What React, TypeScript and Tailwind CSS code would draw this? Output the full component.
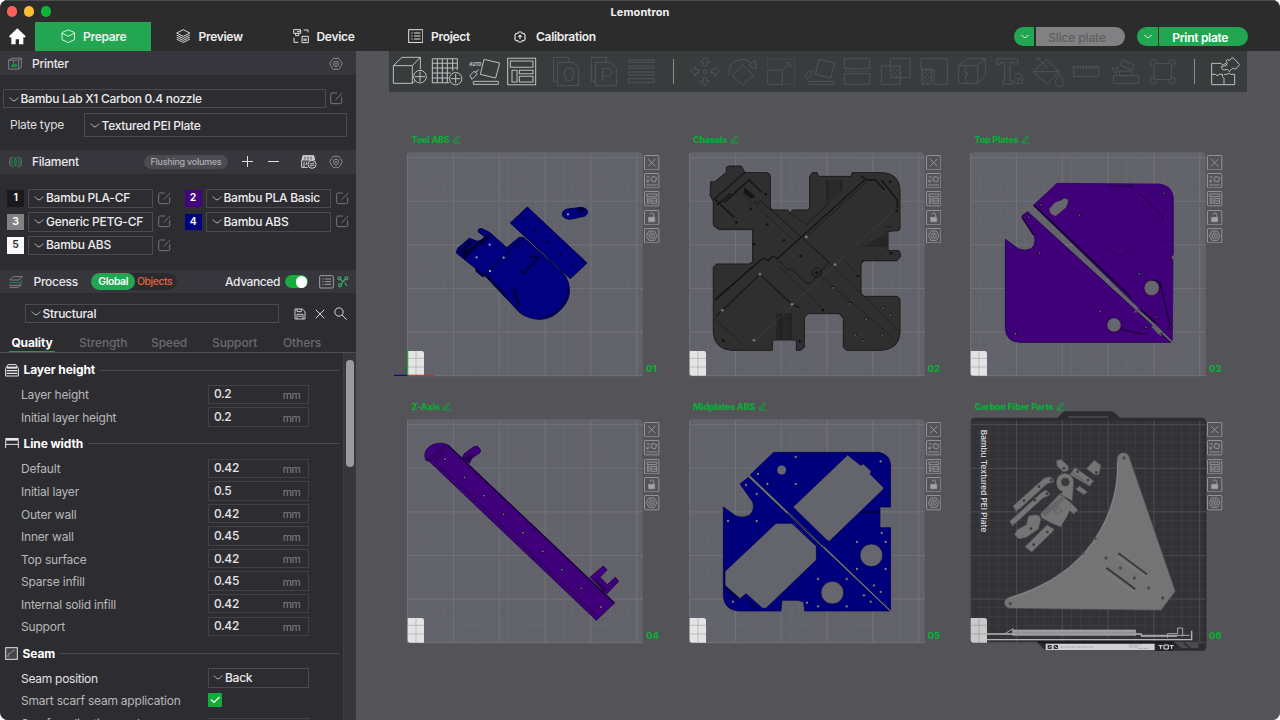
import React, { ReactNode } from "react";

/* ---------- small shared pieces ---------- */

function Chevron({ className = "" }: { className?: string }) {
  return (
    <svg width="10" height="5" viewBox="0 0 10 5" className={"shrink-0 " + className} fill="none" stroke="currentColor" strokeWidth="1">
      <path d="M0.5 0.8 C2 1.2 3.6 3.9 5 3.9 S8 1.2 9.5 0.8" />
    </svg>
  );
}

function EditIcon() {
  return (
    <svg width="13" height="13" viewBox="0 0 39 39" fill="none" stroke="#77777b" strokeWidth="3" className="shrink-0">
      <path d="M21 3H6Q2 3 2 8V31Q2 35 6 35H31Q35 35 35 31V16" />
      <path d="M17 23 L37 3" />
    </svg>
  );
}

function HexGear() {
  return (
    <svg width="14" height="14" viewBox="0 0 42 42" fill="none" stroke="#929297" strokeWidth="2.8" className="shrink-0">
      <path d="M14 3 Q21 7 28 3 L32 8 L34 11 L40 20 L34 30 L32 34 L28 38 Q21 34 14 38 L10 34 L8 30 L2 20 L8 11 L10 8 Z" strokeLinejoin="round" />
      <circle cx="21" cy="20.5" r="8" />
      <circle cx="21" cy="20.5" r="2" />
    </svg>
  );
}

function Select({ text, className }: { text: string; className: string }) {
  return (
    <div className={"flex items-center border border-[#4a4a51] text-[#ececee] text-[12px] font-medium " + className}>
      <Chevron className="text-[#b5b5b8] mr-[2px]" />
      <span className="whitespace-nowrap">{text}</span>
    </div>
  );
}

/* ---------- header ---------- */

function Header() {
  return (
    <header className="h-[51px] flex flex-col bg-[#2c2c2d] border-t border-[#4c4c4d]">
      <div className="h-[21px] grid grid-cols-3 items-center">
        <div className="flex items-center gap-[6.5px] pl-[6.5px]">
          <span className="size-[10.5px] rounded-full bg-[#fe5f57]" />
          <span className="size-[10.5px] rounded-full bg-[#febc2e]" />
          <span className="size-[10.5px] rounded-full bg-[#0eb435]" />
        </div>
        <div className="text-center text-[11px] leading-[20px] font-bold text-[#f2f2f2] tracking-[0.1px]">Lemontron</div>
      </div>
      <nav className="h-[29px] flex items-center text-[12px] font-semibold text-[#ededed] tracking-[-0.3px]">
        <div className="w-[35px] flex items-center pl-[8.5px]">
          <svg width="17" height="17" viewBox="0 0 51 51" fill="#fff">
            <path d="M25 1 L50 25 L46 29 L43 27 V49 H30 V34 H20 V49 H7 V27 L4 29 L0 25 Z" />
          </svg>
        </div>
        <div className="w-[116px] h-[29px] bg-[#22a652] flex items-center pl-[25.5px]">
          <svg width="14.5" height="14.5" viewBox="0 0 43 42" fill="none" stroke="#dff3e6" strokeWidth="2.8" strokeLinejoin="round">
            <path d="M21.5 2 L40 10 V31 L21.5 40 L3 31 V10 Z M3 12 L21.5 21 L40 12" />
          </svg>
          <span className="ml-[8px] pt-[1px]">Prepare</span>
        </div>
        <div className="w-[117px] flex items-center pl-[25px]">
          <svg width="14.5" height="14.5" viewBox="0 0 43 43" fill="none" stroke="#e0e0e0" strokeWidth="2.8" strokeLinejoin="round">
            <path d="M21.5 2 L41 12 L21.5 22 L2 12 Z M2 18 L21.5 28 L41 18 M2 24 L21.5 34 L41 24 M2 30 L21.5 40 L41 30" />
          </svg>
          <span className="ml-[8px] pt-[1px]">Preview</span>
        </div>
        <div className="w-[117px] flex items-center pl-[25px]">
          <svg width="16" height="15" viewBox="0 0 48 45" fill="none" stroke="#e0e0e0" strokeWidth="3">
            <path d="M2 2H23V13H2Z M8 13V20H17V13 M12 8H23 M32 3H45V10 M3 26V40H16 M27 22H46V41H27Z M33 28V36 M39 28V36 M33 33H39" />
          </svg>
          <span className="ml-[7.5px] pt-[1px]">Device</span>
        </div>
        <div className="w-[117px] flex items-center pl-[22.5px]">
          <svg width="15.5" height="14.5" viewBox="0 0 46 43" fill="none" stroke="#e0e0e0" strokeWidth="3">
            <rect x="2" y="2" width="42" height="38" />
            <path d="M10 12H14 M18 12H37 M10 21H14 M18 21H37 M10 30H14 M18 30H37" />
          </svg>
          <span className="ml-[8px] pt-[1px]">Project</span>
        </div>
        <div className="flex items-center pl-[12px]">
          <svg width="12" height="12" viewBox="0 0 36 36" fill="none" stroke="#e0e0e0" strokeWidth="3.4" strokeLinejoin="round">
            <path d="M14 3 H22 L25 7 L31 8 L34 14 L32 18 L34 23 L31 28 L25 29 L22 33 H14 L11 29 L5 28 L2 23 L4 18 L2 14 L5 8 L11 7 Z" />
            <path d="M18 25V13 M13 18L18 12L23 18" />
          </svg>
          <span className="ml-[10px] pt-[1px]">Calibration</span>
        </div>
        <div className="ml-auto mr-[32.5px] flex items-center gap-[12.5px]">
          <div className="flex h-[19.5px] gap-[1.5px] rounded-full overflow-hidden">
            <div className="w-[20.5px] bg-[#22a652] flex items-center justify-center pl-[2px]"><Chevron className="text-white scale-[0.85]" /></div>
            <div className="w-[89px] bg-[#818183] text-[#5e5e60] flex items-center justify-center pr-[6px] pt-[2px] tracking-[-0.15px] font-medium">Slice plate</div>
          </div>
          <div className="flex h-[19.5px] gap-[1.5px] rounded-full overflow-hidden">
            <div className="w-[20.5px] bg-[#22a652] flex items-center justify-center pl-[2px]"><Chevron className="text-white scale-[0.85]" /></div>
            <div className="w-[88.5px] bg-[#22a652] text-white flex items-center justify-center pr-[6px] pt-[2px]">Print plate</div>
          </div>
        </div>
      </nav>
    </header>
  );
}

/* ---------- sidebar ---------- */

function Filament({ n, name, swatch, digit }: { n: number; name: string; swatch: string; digit: string }) {
  return (
    <div className="flex items-center h-[19.5px]">
      <span className={"w-[17px] h-[16.5px] flex items-center justify-center text-[10.5px] font-semibold " + swatch + " " + digit}>{n}</span>
      <Select text={name} className="w-[125px] h-[19.5px] pl-[5px] ml-[4px] mr-[5px]" />
      <EditIcon />
    </div>
  );
}

function Heading({ icon, text }: { icon: ReactNode; text: string }) {
  return (
    <div className="flex items-center h-[16px] pl-[5px] pr-[4px]">
      {icon}
      <span className="ml-[4.5px] mr-[4.5px] text-[12px] font-bold text-white tracking-[-0.1px]">{text}</span>
      <span className="flex-1 h-px bg-[#4a4a4e]" />
    </div>
  );
}

function Field({ label, value }: { label: string; value: string }) {
  return (
    <div className="flex items-center h-[22.55px] pl-[21px]">
      <span className="w-[187px] text-[12px] text-[#b8b8ba] pt-[2px] tracking-[-0.2px]">{label}</span>
      <div className="w-[101px] h-[19.5px] border border-[#414147] flex items-center justify-between pl-[5px] pr-[7.5px]">
        <span className="text-[12px] font-medium text-[#e4e4e6] tracking-[-0.35px]">{value}</span>
        <span className="text-[10.5px] text-[#818184] pt-[3px]">mm</span>
      </div>
    </div>
  );
}

const widths: [string, string][] = [
  ["Default", "0.42"],
  ["Initial layer", "0.5"],
  ["Outer wall", "0.42"],
  ["Inner wall", "0.45"],
  ["Top surface", "0.42"],
  ["Sparse infill", "0.45"],
  ["Internal solid infill", "0.42"],
  ["Support", "0.42"],
];

function Sidebar() {
  return (
    <aside className="w-[356px] shrink-0 bg-[#2d2d31] flex flex-col overflow-hidden tracking-[-0.27px]">
      <div className="h-[24px] shrink-0 bg-[#36363c] flex items-center pl-[8px] pr-[13px] pt-[1px]">
        <svg width="14" height="13" viewBox="0 0 42 38" fill="none" stroke="#8b8b90" strokeWidth="2.6">
          <path d="M2 9L12 3H40V30L32 36H2Z M2 9H32V36 M32 9L40 3" />
          <path d="M9 30V24L16 20H27V30Z" fill="#1d8a45" stroke="none" />
          <path d="M17 10V19" />
        </svg>
        <span className="ml-[10px] text-[12px] font-medium text-[#e8e8ea]">Printer</span>
        <div className="ml-auto"><HexGear /></div>
      </div>

      <div className="pt-[14px] h-[75px] shrink-0">
        <div className="flex items-center pl-[3px]">
          <Select text="Bambu Lab X1 Carbon 0.4 nozzle" className="w-[323px] h-[19px] pl-[4.5px] mr-[4px] pt-px" />
          <EditIcon />
        </div>
        <div className="flex items-center pl-[10px] mt-[5px]">
          <span className="w-[74px] text-[12px] text-[#dcdcde]">Plate type</span>
          <Select text="Textured PEI Plate" className="w-[263px] h-[24px] pl-[4.5px] pt-px" />
        </div>
      </div>

      <div className="h-[23.5px] shrink-0 bg-[#36363c] flex items-center pl-[9px] pr-[13px]">
        <svg width="13" height="12" viewBox="0 0 39 36" fill="none" strokeWidth="2.6">
          <path d="M9 2Q2 6 2 18T9 34 M30 2Q37 6 37 18T30 34" stroke="#85858a" />
          <path d="M14 4Q9 10 9 18T14 32 M22 4Q17 10 17 18T22 32 M17 4Q22 10 22 18T17 32 M25 4Q30 10 30 18T25 32" stroke="#1f9a4c" />
        </svg>
        <span className="ml-[10px] text-[12px] font-medium text-[#e8e8ea]">Filament</span>
        <span className="ml-auto w-[84px] h-[14px] rounded-full bg-[#4b4b51] text-[#aeaeb2] text-[9px] font-medium flex items-center justify-center">Flushing volumes</span>
        <svg width="11" height="11" viewBox="0 0 11 11" stroke="#e0e0e0" className="ml-[14px]"><path d="M0 5.5H11M5.5 0V11" /></svg>
        <svg width="11" height="11" viewBox="0 0 11 11" stroke="#e0e0e0" className="ml-[15px]"><path d="M0 5.5H11" /></svg>
        <svg width="16" height="14" viewBox="0 0 48 42" fill="none" stroke="#d0d0d2" strokeWidth="3" className="ml-[22px] mr-[12px]">
          <path d="M6 2H38L41 15H3Z" fill="#c8c8ca" />
          <path d="M12 5V14M21 5V14M30 5V14" stroke="#55555a" />
          <path d="M2 15V37H20 M9 20V37 M16 20V30" />
          <circle cx="33" cy="28" r="12" fill="#36363c" />
          <path d="M26 26H39L35 22M40 31H27L31 35" strokeWidth="2.4" />
        </svg>
        <HexGear />
      </div>

      <div className="h-[96px] shrink-0 pt-[15px] pl-[7px] flex gap-[13.5px]">
        <div className="flex flex-col gap-[4px]">
          <Filament n={1} name="Bambu PLA-CF" swatch="bg-[#1a1a1c]" digit="text-white" />
          <Filament n={3} name="Generic PETG-CF" swatch="bg-[#828284]" digit="text-white" />
          <Filament n={5} name="Bambu ABS" swatch="bg-[#fafafa]" digit="text-[#333]" />
        </div>
        <div className="flex flex-col gap-[4px]">
          <Filament n={2} name="Bambu PLA Basic" swatch="bg-[#44047f]" digit="text-white" />
          <Filament n={4} name="Bambu ABS" swatch="bg-[#000080]" digit="text-white" />
        </div>
      </div>

      <div className="h-[23.5px] shrink-0 bg-[#36363c] flex items-center pl-[9px] pr-[7px] pt-[1px]">
        <svg width="14" height="12" viewBox="0 0 42 36" fill="none" strokeWidth="2.6" strokeLinejoin="round">
          <path d="M12 2H40L30 12H2Z" stroke="#8b8b90" />
          <path d="M2 19L3 20H30L40 12" stroke="#1f9a4c" />
          <path d="M2 26V28H30L40 20 M2 32L3 34H28L36 27" stroke="#8b8b90" />
        </svg>
        <span className="ml-[10.5px] text-[12px] font-medium text-[#e8e8ea]">Process</span>
        <div className="ml-[13px] w-[86.5px] h-[17px] rounded-full bg-[#2b2b2f] flex items-center text-[10.5px] font-semibold">
          <span className="w-[44.5px] h-[17px] rounded-full bg-[#22a652] text-white flex items-center justify-center tracking-[-0.45px]">Global</span>
          <span className="ml-[1.5px] font-medium text-[#e0613c] tracking-[-0.45px]">Objects</span>
        </div>
        <span className="ml-auto mr-[5px] text-[12px] font-medium text-[#e8e8ea] tracking-[-0.4px]">Advanced</span>
        <span className="w-[23px] h-[13px] rounded-full bg-[#14ae3c] flex items-center justify-end pr-[1px]">
          <span className="size-[11.5px] rounded-full bg-white" />
        </span>
        <svg width="15" height="14" viewBox="0 0 45 42" fill="none" stroke="#a8a8ac" strokeWidth="2.8" className="ml-[11px]">
          <rect x="2" y="2" width="41" height="37" rx="3" />
          <path d="M10 12H14 M18 12H36 M10 20H14 M18 20H36 M10 28H14 M18 28H36" />
        </svg>
        <svg width="12" height="12" viewBox="0 0 36 36" fill="none" stroke="#3fae68" strokeWidth="3.4" className="ml-[3px]">
          <circle cx="7" cy="7" r="4.5" /><circle cx="28" cy="7" r="4.5" /><circle cx="9" cy="28" r="4.5" />
          <path d="M24 10L12 24 M11 10L18 17 M23 20L30 30" />
        </svg>
      </div>

      <div className="pt-[11px] pl-[25px] h-[30px] shrink-0 flex items-center">
        <Select text="Structural" className="w-[254px] h-[19px] pl-[4.5px]" />
        <svg width="12" height="12" viewBox="0 0 36 36" fill="none" stroke="#d8d8da" strokeWidth="2.8" className="ml-[14.5px]" strokeLinejoin="round">
          <path d="M3 3H25L33 11V33H3Z M9 3V11H22V3 M9 33V19H27V33 M13 25H23" />
        </svg>
        <svg width="10" height="10" viewBox="0 0 30 30" stroke="#d8d8da" strokeWidth="3" className="ml-[9.5px]"><path d="M2 2L28 28M28 2L2 28" /></svg>
        <svg width="13" height="13" viewBox="0 0 39 39" fill="none" stroke="#d8d8da" strokeWidth="3" className="ml-[9px]"><circle cx="15" cy="15" r="12.5" /><path d="M24 24L38 38" /></svg>
      </div>

      <div className="h-[29.5px] shrink-0 border-b border-[#4f4f54] flex items-end text-[12px] text-[#6a6a6f] font-medium pl-[9px] tracking-[-0.1px]">
        <span className="w-[46px] h-[18px] leading-[18px] flex justify-center border-b border-[#1f9a4c] text-white font-bold tracking-[-0.15px]">Quality</span>
        <span className="w-[71px] h-[18px] leading-[18px] pl-[24px]">Strength</span>
        <span className="w-[61px] h-[18px] leading-[18px] pl-[25px]">Speed</span>
        <span className="w-[70px] h-[18px] leading-[18px] pl-[25px]">Support</span>
        <span className="h-[18px] leading-[18px] pl-[26px]">Others</span>
      </div>

      <div className="flex-1 min-h-0 flex overflow-hidden">
        <div className="w-[343px] shrink-0 pt-[9.5px]">
          <Heading
            text="Layer height"
            icon={
              <svg width="14" height="13" viewBox="0 0 42 39" fill="none" stroke="#e8e8e8" strokeWidth="3">
                <path d="M9 2H33L40 13V36H2V13Z" /><path d="M6 11H36" strokeWidth="6" /><path d="M5 20H37M5 28H37" strokeWidth="4" />
              </svg>
            }
          />
          <div className="pt-[5.2px] pb-[7.5px]">
            <Field label="Layer height" value="0.2" />
            <Field label="Initial layer height" value="0.2" />
          </div>
          <Heading
            text="Line width"
            icon={
              <svg width="14" height="13" viewBox="0 0 42 39" fill="none" stroke="#e8e8e8" strokeWidth="3">
                <path d="M1 7H41" strokeWidth="8" /><path d="M2 11V33M40 11V33M2 22H40" />
              </svg>
            }
          />
          <div className="pt-[5.4px] pb-[8px]">
            {widths.map(([l, v]) => (
              <Field key={l} label={l} value={v} />
            ))}
          </div>
          <Heading
            text="Seam"
            icon={
              <svg width="13" height="13" viewBox="0 0 39 39" fill="#45454a" stroke="#e0e0e0" strokeWidth="3">
                <rect x="2" y="2" width="35" height="35" /><path d="M9 30V22L15 19L20 15L30 8" fill="none" strokeDasharray="6 2" strokeWidth="2" />
              </svg>
            }
          />
          <div className="pt-[5px]">
            <div className="flex items-center h-[22.5px] pl-[21px]">
              <span className="w-[187px] text-[12px] text-[#e2e2e4] pt-[2px]">Seam position</span>
              <Select text="Back" className="w-[101px] h-[19.5px] pl-[4px]" />
            </div>
            <div className="flex items-center h-[22.5px] pl-[21px]">
              <span className="w-[187px] text-[12px] text-[#b8b8ba] pt-px tracking-[-0.22px]">Smart scarf seam application</span>
              <svg width="14" height="14" viewBox="0 0 14 14" fill="none"><rect width="14" height="14" rx="1" fill="#11ad3a" /><path d="M3 6.5L6 9.5L11.5 4" stroke="#fff" strokeWidth="1.2" /></svg>
            </div>
            <div className="flex items-start h-[22.5px] pl-[21px] pt-[3px]">
              <span className="w-[187px] text-[12px] text-[#b8b8ba] tracking-[-0.22px]">Scarf application angle</span>
              <div className="w-[101px] h-[19.5px] border border-[#414147] mt-[3px]" />
            </div>
          </div>
        </div>
        <div className="w-[12.5px] bg-[#37373b] border-l border-[#404044] flex justify-center pt-[7px]">
          <span className="w-[7.5px] h-[107px] rounded-full bg-[#9b9b9e]" />
        </div>
      </div>
    </aside>
  );
}

/* ---------- toolbar ---------- */

function Tool({ x, dim, children }: { x: number; dim?: boolean; children: ReactNode }) {
  return (
    <svg width="38" height="41" viewBox={`${x} 153 114 123`} fill="none" stroke={dim ? "#52525a" : "#bdbfbf"} strokeWidth="3" strokeLinejoin="round" className="shrink-0">
      {children}
    </svg>
  );
}

function Toolbar() {
  return (
    <div className="h-[41px] w-[858px] bg-[#383c3d] flex items-center pl-px">
      <Tool x={90}>
        <path d="M100 197H157V250H100Z M100 197L126 172H181L157 197 M157 250L166 242 M181 172V208" />
        <circle cx="180" cy="230" r="19" /><path d="M180 215V245M165 230H195" />
      </Tool>
      <Tool x={204}>
        <path d="M217 176H292V210 M217 176V248H268 M217 190H292 M217 204H292 M217 219H272 M217 234H266 M232 176V248 M247 176V248 M262 176V248 M278 176V212" strokeWidth="3.2" />
        <circle cx="287" cy="236" r="18.5" /><path d="M287 222V250M273 236H301" />
      </Tool>
      <Tool x={318}>
        <text x="328" y="199" fontSize="14" fontWeight="800" fill="#bdbfbf" stroke="none" fontFamily="Inter, sans-serif" textLength="36" lengthAdjust="spacingAndGlyphs">AUTO</text>
        <path d="M372 178L419 189L407 234L361 223Z M340 244H415V253H340Z M356 209L344 219 M330 226L343 213L352 222L336 238Z" />
      </Tool>
      <Tool x={432}>
        <path d="M443 175H527V254H443Z M451 183H519V202H451Z M456 211H471V246H456Z M478 211H519V221H478Z M478 229H519V246H478Z" strokeWidth="3.2" />
      </Tool>
      <div className="w-[5px] shrink-0" />
      <Tool dim x={561}><path d="M593 187H640L656 202V257H593Z M593 244H581V172H626V187" /><rect x="614" y="204" width="26" height="38" rx="12" /></Tool>
      <Tool dim x={675}><path d="M706 187H753L769 202V257H706Z M706 244H694V172H739V187 M728 244V206H744Q755 208 755 217T744 228H728" /></Tool>
      <Tool dim x={789}><path d="M806 180H882V187H806Z M806 198H882V205H806Z M806 216H882V225H806Z M806 236H882V248H806Z" /></Tool>
      <div className="w-[25px] shrink-0 flex justify-center"><span className="w-px h-[25px] bg-[#8a8c8c]" /></div>
      <Tool dim x={978}>
        <path d="M1030 210h10v10h-10Z M1035 172L1049 187H1040V197H1030V187H1021Z M1035 257L1049 243H1040V233H1030V243H1021Z M992 214L1007 200V209H1017V219H1007V228Z M1078 214L1063 200V209H1053V219H1063V228Z" />
      </Tool>
      <Tool dim x={1092}>
        <path d="M1148 195L1180 226L1148 255L1117 226Z M1107 226Q1104 180 1146 178Q1165 178 1176 190 M1186 180L1190 206L1166 197Z" />
      </Tool>
      <Tool dim x={1206}>
        <path d="M1223 210H1267V253H1223Z" /><path d="M1223 200V177H1304V253H1276" strokeDasharray="5 5" /><path d="M1270 208L1284 195L1278 188H1292V202L1287 197" />
      </Tool>
      <Tool dim x={1320}>
        <path d="M1377 178L1424 189L1412 234L1366 223Z M1345 244H1420V253H1345Z M1361 209L1349 219 M1335 226L1348 213L1357 222L1341 238Z" />
      </Tool>
      <Tool dim x={54}>
        <path d="M73 205V176H149V205Z M73 221V253H149V221Z" /><path d="M75 213H148" strokeDasharray="4 3" />
      </Tool>
      <Tool dim x={168}>
        <path d="M211 176H270V233H211Z M184 198H241V253H184Z M212 215L228 199 M212 231L240 203 M224 233L241 216" />
      </Tool>
      <Tool dim x={282}>
        <path d="M303 176H382V253H342V208H303Z M306 208H334V253H306Z M308 224L322 210 M308 238L334 212 M308 251L334 225 M320 252L334 238" />
      </Tool>
      <Tool dim x={396}>
        <path d="M416 197H473V250H416Z M416 197L442 176H496L473 197 M473 250L496 226V176 M440 200L432 216L444 220L436 234L441 250" />
      </Tool>
      <Tool dim x={510}>
        <path d="M531 176H593V193H583V187H570V244H578V252H547V244H554V187H541V193H531Z M586 226Q594 216 602 222Q607 225 607 233V250H598Q582 254 582 243Q583 235 600 236 M602 238Q592 240 594 245" />
      </Tool>
      <Tool dim x={624}>
        <path d="M680 178L718 215L680 252L639 215Z M641 215H717 M651 174L684 204 M648 182L660 172 M719 222Q732 240 732 248Q730 260 719 260T706 248Q706 240 719 222" />
      </Tool>
      <Tool dim x={738}>
        <path d="M761 200H836V229H761Z M772 200V208 M782 200V208 M791 200V213 M800 200V208 M809 200V208 M819 200V208 M828 200V208" />
      </Tool>
      <Tool dim x={852}>
        <path d="M880 227H956V250H880Z M899 213H935V227H899Z M908 180L943 194L936 210L900 196Z M876 206L894 203L888 221Z" />
      </Tool>
      <Tool dim x={966}>
        <path d="M1002 191H1054V239H1002Z" />
        <path d="M1000 199A10 10 0 1 1 1010 188 M1056 199A10 10 0 1 0 1046 188 M1000 232A10 10 0 1 0 1010 242 M1056 232A10 10 0 1 1 1046 242" />
      </Tool>
      <div className="w-[28px] shrink-0 flex justify-center"><span className="w-px h-[25px] bg-[#8a8c8c]" /></div>
      <Tool x={1164}>
        <path d="M1175 190H1203Q1206 196 1210 194Q1218 186 1221 196 M1175 190V254H1244V223H1232Q1228 215 1222 223H1212 M1175 223H1186Q1190 231 1198 223H1208 M1208 223Q1204 229 1212 235V254 M1222 178L1229 182Q1236 168 1242 176L1259 194L1246 208Q1240 202 1236 206T1228 215L1222 208Q1205 214 1204 200Q1214 196 1217 198Q1226 190 1218 183Z" />
      </Tool>
    </div>
  );
}

/* ---------- build plates ---------- */

const seq = (n: number) => Array.from({ length: n }, (_, i) => i);

function Bed({ ox, oy, dark }: { ox: number; oy: number; dark?: boolean }) {
  const minor = dark ? "#404047" : "#6a6a71";
  const major = dark ? "#4b4b52" : "#717178";
  return (
    <g>
      {!dark && <path d={`M${ox} ${oy + 672}V${oy + 14}Q${ox} ${oy} ${ox + 14} ${oy}H${ox + 693}Q${ox + 707} ${oy} ${ox + 707} ${oy + 14}V${oy + 672}Z`} fill="#62626a" />}
      <g stroke={minor} strokeWidth="2">
        {seq(26).map((i) => <path key={"v" + i} d={`M${ox + 2 + i * 27.5} ${oy + 4}V${oy + 672}`} />)}
        {seq(26).map((i) => <path key={"h" + i} d={`M${ox} ${oy + 17 + i * 26.15}H${ox + 707}`} />)}
      </g>
      <g stroke={major} strokeWidth="3">
        {seq(6).map((i) => <path key={"v" + i} d={`M${ox + 2 + i * 137.4} ${oy + 4}V${oy + 672}`} />)}
        {seq(6).map((i) => <path key={"h" + i} d={`M${ox} ${oy + 17 + i * 130.8}H${ox + 707}`} />)}
      </g>
    </g>
  );
}

function CornerTile({ ox, oy, dark }: { ox: number; oy: number; dark?: boolean }) {
  return (
    <g transform={`translate(${ox},${oy})`}>
      <path d="M2 597H44Q51 597 51 604V671H10Q2 671 2 663Z" fill={dark ? "#c9cac9" : "#e3e4e4"} />
      <path d="M27 597V671 M2 619H51 M2 645H51" stroke={dark ? "#a0a1a1" : "#b4b5b6"} strokeWidth="2.5" />
    </g>
  );
}

function Dots({ pts, fill, r = 4 }: { pts: number[][]; fill: string; r?: number }) {
  return <g fill={fill}>{pts.map(([x, y]) => <circle key={x + "-" + y} cx={x} cy={y} r={r} />)}</g>;
}

function ToolParts() {
  return (
    <g fill="#000080" stroke="#00004a" strokeWidth="3" strokeLinejoin="round">
      <path d="M412 231L591 399L541 446L361 279Z" />
      <path d="M390 300L475 375 M430 262L515 338" stroke="#00005c" fill="none" strokeWidth="2" />
      <path d="M534 237L568 233Q592 232 593 247Q590 260 572 261L540 268Q517 266 517 252Q519 238 534 237Z" />
      <circle cx="573" cy="240" r="9" fill="#00003a" stroke="none" />
      <path d="M199 369L203 355L238 325L262 334L278 330L284 320L264 305L266 297L276 296L300 308L350 353L388 322H400L518 428Q540 452 538 490Q534 520 505 546Q480 568 447 568Q415 566 392 550L286 438L276 439L258 424V416Z" />
      <path d="M205 366L238 330L250 338L215 372Z M224 388L262 352L306 322L296 312L260 338L244 352L212 370Z" fill="#00003c" stroke="none" />
      <path d="M400 324L278 438 M284 434L392 548" stroke="#000044" fill="none" strokeWidth="4" />
      <path d="M292 432Q298 450 345 490" stroke="#000040" strokeWidth="5" fill="none" />
      <path d="M258 416L278 436" stroke="#000040" strokeWidth="7" fill="none" />
      <path d="M374 474Q366 505 392 532Q380 500 376 474Z" fill="#00003c" />
      <path d="M534 470Q536 510 505 540Q480 562 447 563" stroke="#000055" strokeWidth="5" fill="none" />
      <path d="M392 422L404 431L410 418L446 384L430 380" stroke="#00002c" strokeWidth="5" fill="none" />
      <path d="M360 372Q352 398 390 408 M418 396L432 380" stroke="#00005a" strokeWidth="2" fill="none" />
      <g stroke="none">
        <Dots fill="#9fa0b8" r={3.4} pts={[[299, 344], [260, 382], [341, 383], [300, 423], [534, 253]]} />
        <Dots fill="#00002c" pts={[[399, 266], [436, 301], [474, 337], [511, 373], [548, 408], [385, 350], [421, 379]]} />
      </g>
    </g>
  );
}

function Chassis() {
  return (
    <g strokeLinejoin="round" fill="none">
      <path
        d="M90 155L101 156L137 127V112L145 108H182L193 128H260Q269 130 269 140V232L276 240H322L327 250L335 240H380L387 232V138L395 128H410L413 139H512L514 128H608Q655 132 658 178V298L652 302L622 304V362H655L659 370V382L648 392H552L541 402V490L550 499H650L658 507V610Q655 655 605 661H497L488 652V565L475 551H382L371 563V652L360 661H347V630H275V661H150Q103 656 98 610V412L108 402H205L216 395V300L206 297H115L98 285V215L88 195Z"
        fill="#2f2f30" stroke="#1a1a1b" strokeWidth="3"
      />
      <path d="M286 550H332V628H286Z M545 350L622 308V352Z" fill="#262627" />
      <path d="M436 150H488V180L436 230Z" fill="#2a2a2b" />
      <path d="M540 138L560 150H584L612 180M602 150L650 210V235" stroke="#131314" strokeWidth="4" />
      <path d="M552 150L290 386L276 378L262 392L248 384L104 508" stroke="#141415" strokeWidth="4" />
      <path d="M556 158L380 318 M440 224L378 284" stroke="#1b1b1c" strokeWidth="3" />
      <path d="M100 205L160 262M130 218L205 150L242 186M108 226L150 190" stroke="#151516" strokeWidth="5" />
      <path d="M104 205L192 128" stroke="#1b1b1d" strokeWidth="5" />
      <path d="M192 172L225 200L213 206L188 188Z" fill="#151516" />
      <path d="M220 215L232 222L240 212L445 396L388 462L372 455L330 415L322 420L295 392" stroke="#18181a" strokeWidth="3" />
      <path d="M185 190L355 345 M295 408L430 540 M104 568L188 645 M410 430L640 625 M443 395L656 605 M372 330L445 398 M500 398L532 440 M330 250L380 285" stroke="#1f1f20" strokeWidth="2.5" />
      <path d="M238 433L105 560 M238 433L334 523L360 535 M216 410L105 510" stroke="#151516" strokeWidth="3.5" />
      <path d="M640 240L463 404L225 632" stroke="#404042" strokeWidth="2.5" />
      <circle cx="408" cy="428" r="14" stroke="#141415" strokeWidth="3" /><circle cx="408" cy="428" r="5" fill="#141415" />
      <path d="M612 290H638 M98 287L115 299H208 M541 392H650 M440 150V210 M480 150V180 M300 550V628 M330 550V628" stroke="#1a1a1b" strokeWidth="2.5" />
      <Dots fill="#111112" pts={[[628, 156], [648, 243], [631, 370], [255, 193], [211, 237], [167, 277], [260, 284], [310, 331], [359, 378], [128, 632], [357, 634], [220, 343], [427, 541], [532, 438]]} />
      <Dots fill="#77777b" pts={[[377, 321], [463, 404], [238, 433], [125, 541], [334, 523], [220, 631]]} r={4.2} />
      <Dots fill="#151516" r={5} pts={[[457, 473], [507, 520], [556, 566], [608, 533], [629, 554], [604, 613], [523, 613], [546, 632]]} />
      <Dots fill="#606064" r={3} pts={[[457, 474], [507, 521], [556, 567], [608, 534], [629, 555], [604, 614], [523, 614], [546, 633]]} />
    </g>
  );
}

function TopPlates() {
  const holes = [[243, 225], [206, 262], [358, 255], [612, 190], [238, 370], [538, 431], [421, 544], [589, 561], [558, 592], [166, 611]];
  return (
    <g fill="none" strokeLinejoin="round">
      <path d="M291 160L600 162Q638 168 640 205V374L633 382L639 390L637 632L220 226Z" fill="#40007a" stroke="#2a0052" strokeWidth="2" />
      <path d="M185 258L203 245L632 637H178Q138 634 136 596V328L176 357Q195 364 212 357Q228 346 224 322L218 308Z" fill="#40007a" stroke="#230046" strokeWidth="2.5" />
      <path d="M574 590L584 583L612 608L600 618Z M520 548L530 538L538 546Z" fill="#606066" />
      <path d="M222 226L514 502M540 538L586 578" stroke="#170030" strokeWidth="5" />
      <path d="M186 262L220 314 M600 458L630 584Q628 595 620 598M483 598L556 613" stroke="#1a0036" strokeWidth="4" />
      <path d="M448 169H516V176M534 192L544 196L608 260V268" stroke="#1f003e" strokeWidth="3" />
      <path d="M608 266L486 378Q450 370 420 335L378 292 M428 250L449 266" stroke="#260050" strokeWidth="2.4" />
      <path d="M148 538L326 370 M240 636L424 462 M486 378L450 415 M486 596L560 510 M560 636L640 590 M608 340V332H638" stroke="#31005f" strokeWidth="2" />
      <path d="M267 236L285 216L303 210Q312 200 322 206Q330 213 322 224L320 232L288 259Q278 260 268 246Z" fill="#66666c" stroke="#2a0052" strokeWidth="2" />
      <circle cx="575" cy="474" r="23" fill="#66666c" stroke="#1c0038" strokeWidth="2" />
      <circle cx="462" cy="585" r="21.5" fill="#66666c" stroke="#1c0038" strokeWidth="2" />
      <path d="M578 450Q600 448 601 470" stroke="#160030" strokeWidth="4" />
      <Dots fill="#190034" r={5} pts={holes} />
      <Dots fill="#77747f" r={2.5} pts={holes} />
    </g>
  );
}

function ZAxis() {
  const holes = [[165, 193], [224, 248], [282, 303], [341, 359], [399, 414], [458, 470], [516, 525], [574, 581], [633, 637]];
  return (
    <g fill="#40007c" stroke="#230048" strokeWidth="2.5" strokeLinejoin="round">
      <path d="M216 192L222 178L250 157L262 154L272 166L270 174L246 190L238 206Z" />
      <path d="M220 192L242 176L250 182L236 202Z" fill="#2a0054" stroke="none" />
      <path d="M600 548L640 514L651 526L630 548L652 570L676 548L686 560L650 598Z" />
      <path d="M612 552L648 584L640 590Z" fill="#2a0054" />
      <path d="M172 150L674 625L619 677L118 200L108 197Q98 175 116 158Q132 144 160 146Z" />
      <path d="M108 197L165 150 M118 200L168 156 M134 200L168 168 M134 200L622 664" fill="none" stroke="#1d003c" strokeWidth="3" />
      <path d="M174 152L672 624" fill="none" stroke="#1a0038" strokeWidth="4" />
      <path d="M176 168L655 620" fill="none" stroke="#300060" strokeWidth="1.5" />
      <g stroke="none">
        <Dots fill="#1b0038" r={5} pts={holes} />
        <Dots fill="#85808f" r={2.8} pts={holes} />
      </g>
    </g>
  );
}

function Midplates() {
  const holes = [[345, 187], [232, 238], [260, 268], [345, 268], [600, 200], [196, 271], [228, 298], [142, 379], [228, 379], [603, 415], [529, 442], [615, 442], [529, 523], [615, 523], [580, 572], [600, 592], [550, 602], [570, 621], [412, 553], [498, 553], [412, 635], [498, 635], [379, 624], [157, 621]];
  return (
    <g fill="none" strokeLinejoin="round">
      <path d="M279 173H596Q628 180 630 212V337H598V399H630V646L208 241Z" fill="#00007c" stroke="#000048" strokeWidth="2" />
      <path d="M178 268L203 248L627 649H372L369 622L352 617H304L301 649H172Q132 645 128 606V337L166 364Q187 372 206 362Q224 345 216 322Z" fill="#00007c" stroke="#000048" strokeWidth="2" />
      <path d="M204 244L628 648" stroke="#7d7d84" strokeWidth="3" />
      <path d="M320 355L430 456" stroke="#00003c" strokeWidth="3" />
      <path d="M540 348H597V356H525Z M134 572L174 610L170 616L134 584Z M190 604L232 640L215 636Z" fill="#000044" />
      <path d="M240 240L340 335M330 195L402 265M318 585V615M357 555V615" stroke="#000058" strokeWidth="2" />
      <path d="M501 181L540 212L548 208L572 230L568 238L608 278V284L446 440L438 436L337 337Z" fill="#64646c" stroke="#000044" strokeWidth="2" />
      <path d="M286 386H334L407 455V496L256 641H246L196 597L178 612L133 572V530Z" fill="#64646c" stroke="#000044" strokeWidth="2" />
      <circle cx="303" cy="226" r="13.5" fill="#66666c" />
      <circle cx="572" cy="482" r="34" fill="#66666c" stroke="#000044" strokeWidth="2" />
      <circle cx="455" cy="594" r="34" fill="#66666c" stroke="#000044" strokeWidth="2" />
      <Dots fill="#000050" r={5.5} pts={holes} />
      <Dots fill="#7c7c88" r={3.5} pts={holes} />
    </g>
  );
}

function CarbonBed() {
  return (
    <g>
      <path d="M290 73L308 54Q311 50 318 50H454Q461 50 466 55L484 73Z" fill="#2c2c30" />
      <path d="M325 68H446" stroke="#4c4c52" strokeWidth="6" />
      <path d="M32 744V84Q32 69 47 69H725Q740 69 740 84V756Q740 768 728 768H262Q252 766 246 758L234 742Z" fill="#2d2d31" />
      <path d="M34 742V78H734V742Z" fill="#323237" />
    </g>
  );
}

function CarbonParts() {
  return (
    <g fill="none" strokeLinejoin="round">
      <path d="M82 718H545V724H652 M82 735H696V708" stroke="#b5b5b8" strokeWidth="4" />
      <path d="M134 718L160 702V722M624 730V717H654V700H669V725 M545 722H690" stroke="#a8a8ac" strokeWidth="3" />
      <path d="M160 706H528V722H160Z" fill="#9b9b9e" stroke="#b0b0b3" strokeWidth="2" />
      <path d="M160 714H528" stroke="#88888b" strokeWidth="2" />
      <path d="M234 743H642" stroke="#18181b" strokeWidth="6" />
      <path d="M246 744L258 768H640L650 745Z" fill="#252528" />
      <path d="M258 747H585V767H258Z" fill="#d2d2d4" />
      <path d="M264 751h12v12h-12ZM282 751h13v12h-13Z" fill="#333" />
      <path d="M268 760l5-6M285 754l7 6" stroke="#eee" strokeWidth="2.5" />
      <path d="M597 753H609M603 752v11 M613 751H626V763H613Z M630 753H642M636 752v11" stroke="#e4e4e6" strokeWidth="3" />
      <path d="M302 757H402M508 757H535M508 751H545M535 761H570" stroke="#a2a2a5" strokeWidth="3" strokeDasharray="8 2 4 3" />
      <path d="M648 745H716V760H665Z" fill="#4a4a50" /><path d="M672 744L690 760" stroke="#2b2b2f" strokeWidth="5" />
      <text transform="translate(64 105) rotate(90)" fontFamily="Inter, sans-serif" fontSize="23" fontWeight="600" fill="#d0d0d3" textLength="308" lengthAdjust="spacingAndGlyphs">Bambu Textured PEI Plate</text>
      <g fill="#747475" stroke="#4a4a4c" strokeWidth="2">
        <path d="M472 192Q474 175 490 174Q506 174 509 188L647 590L604 647L148 641Q134 636 134 622Q136 611 150 607Q290 565 372 474Q478 350 472 192Z" />
        <path d="M474 200Q480 350 372 480Q290 568 150 611" fill="none" stroke="#85858a" strokeWidth="3" />
        <path d="M160 334L254 250L270 246Q284 252 282 262L262 268L170 352Z M150 380L240 298L256 286Q270 290 270 302L250 310L170 384Q164 398 156 392Z" />
        <path d="M290 262Q292 238 316 236Q342 240 342 264L338 320L300 298L310 292Q290 285 290 262Z" />
        <path d="M242 358L300 298L334 324L355 346L342 358L330 348L322 366L308 388L304 398L276 386L246 370Z M330 240L346 218L402 258L390 275Z M380 222L404 196L424 212L418 240L404 240Z M290 198L304 194L326 214V228L312 232L292 214Z M348 284L360 274L384 292L372 300Z" />
        <path d="M164 420L172 405L200 390L206 364L226 360L238 362L244 374L236 404L200 428L178 433Z M196 456L262 390L284 404L278 412L216 472Z" />
      </g>
      <circle cx="317" cy="262" r="12" fill="#37373c" stroke="#48484b" strokeWidth="3" />
      <path d="M246 352L310 302L316 312L256 366Z" fill="#66666a" />
      <path d="M283 346L296 336L306 348L294 360Z M332 330L338 324 M335 232L386 268 M172 350L262 268" stroke="#505053" strokeWidth="2" />
      <path d="M476 476L562 540M440 520L527 584" stroke="#3a3a3d" strokeWidth="7" />
      <path d="M472 486L556 547L564 538M434 530L520 592L530 582M478 482L558 541M442 526L522 586" stroke="#88888b" strokeWidth="2" />
      <Dots fill="#4a4a4c" r={5} pts={[[493, 190], [439, 490], [482, 520], [524, 550], [567, 580], [609, 610], [152, 627], [406, 431], [370, 475]]} />
      <Dots fill="#3a3a3e" r={4} pts={[[274, 257], [238, 276], [193, 318], [262, 297], [225, 317], [176, 348], [165, 390], [214, 402], [263, 412], [222, 450], [354, 231], [385, 256], [313, 221], [410, 233]]} />
    </g>
  );
}

function PlateButton({ children }: { children: ReactNode }) {
  return (
    <svg width="15.33" height="15.33" viewBox="0 0 46 46" fill="none" stroke="#98989c" strokeWidth="2.8">
      <rect x="1.5" y="1.5" width="43" height="43" rx="2" />
      {children}
    </svg>
  );
}

function Plate({ title, num, ox, oy, dark, axes, children }: { title: string; num: string; ox: number; oy: number; dark?: boolean; axes?: boolean; children: ReactNode }) {
  return (
    <section className="flex flex-col">
      <div className="h-[20px] pl-[4.5px] flex items-start relative z-10 text-[#0bab36]">
        <span className="text-[9px] leading-[16px] font-extrabold whitespace-nowrap tracking-[-0.23px]">{title}</span>
        <svg width="9" height="9" viewBox="0 0 27 27" fill="none" stroke="currentColor" strokeWidth="3" className="ml-[2.5px] mt-[3px]">
          <path d="M3 24H26 M4 18L18 3L23 7L10 20L4 21Z" />
        </svg>
      </div>
      <div className="flex h-[224px]">
        <svg width="236" height="224" viewBox={`${ox} ${oy} 708 672`} className="overflow-visible shrink-0">
          {dark && <CarbonBed />}
          <Bed ox={ox} oy={oy} dark={dark} />
          {children}
          <CornerTile ox={ox} oy={oy} dark={dark} />
          {axes && (
            <g>
              <path d="M12 736H53" stroke="#0a0a80" strokeWidth="3.5" />
              <path d="M53 736H134" stroke="#a83a32" strokeWidth="3.5" />
              <path d="M53 660V736" stroke="#18a838" strokeWidth="3.5" />
            </g>
          )}
        </svg>
        <div className="ml-[1.4px] pt-[2.7px] flex flex-col gap-[3px]">
          <PlateButton><path d="M12 12L34 34M34 12L12 34" /></PlateButton>
          <PlateButton><path d="M25 10L38 14L34 27L21 23Z M7 36H39 M8 12H18M9 27L16 19M9 20V27H15" /></PlateButton>
          <PlateButton><path d="M9 9H38V17H9Z M10 22H15V37H10Z M21 23H38M21 30H38M21 37H38M21 22V37M38 22V37" /></PlateButton>
          <PlateButton><path d="M14 22H32V35H14Z" fill="#a4a4a8" /><path d="M18 14Q19 9 24 9T29 14V21" /></PlateButton>
          <PlateButton><path d="M15 9H31L39 23L31 37H15L7 23Z" /><circle cx="23" cy="23" r="8" /><circle cx="23" cy="23" r="2" /></PlateButton>
          <span className="mt-auto h-[15px] leading-[15px] text-[9.5px] font-extrabold text-[#0bab36] pl-[1.5px]">{num}</span>
        </div>
      </div>
    </section>
  );
}

export default function App() {
  return (
    <div className="w-[1280px] h-[720px] bg-white">
      <div className="w-full h-full rounded-[8px] overflow-hidden flex flex-col bg-[#535359] font-['Inter',sans-serif]">
        <Header />
        <div className="flex-1 min-h-0 flex">
          <Sidebar />
          <main className="flex-1 bg-[#535358] pl-[33px] min-w-0">
            <Toolbar />
            <div className="pt-[40px] pl-[18px] grid grid-cols-[281.5px_281.5px_281.5px] auto-rows-[267.33px]">
              <Plate title="Tool ABS" num="01" ox={51} oy={66} axes><ToolParts /></Plate>
              <Plate title="Chassis" num="02" ox={25} oy={66}><Chassis /></Plate>
              <Plate title="Top Plates" num="03" ox={30} oy={66}><TopPlates /></Plate>
              <Plate title="Z-Axis" num="04" ox={51} oy={73}><ZAxis /></Plate>
              <Plate title="Midplates ABS" num="05" ox={25} oy={73}><Midplates /></Plate>
              <Plate title="Carbon Fiber Parts" num="06" ox={31} oy={73} dark><CarbonParts /></Plate>
            </div>
          </main>
        </div>
      </div>
    </div>
  );
}
